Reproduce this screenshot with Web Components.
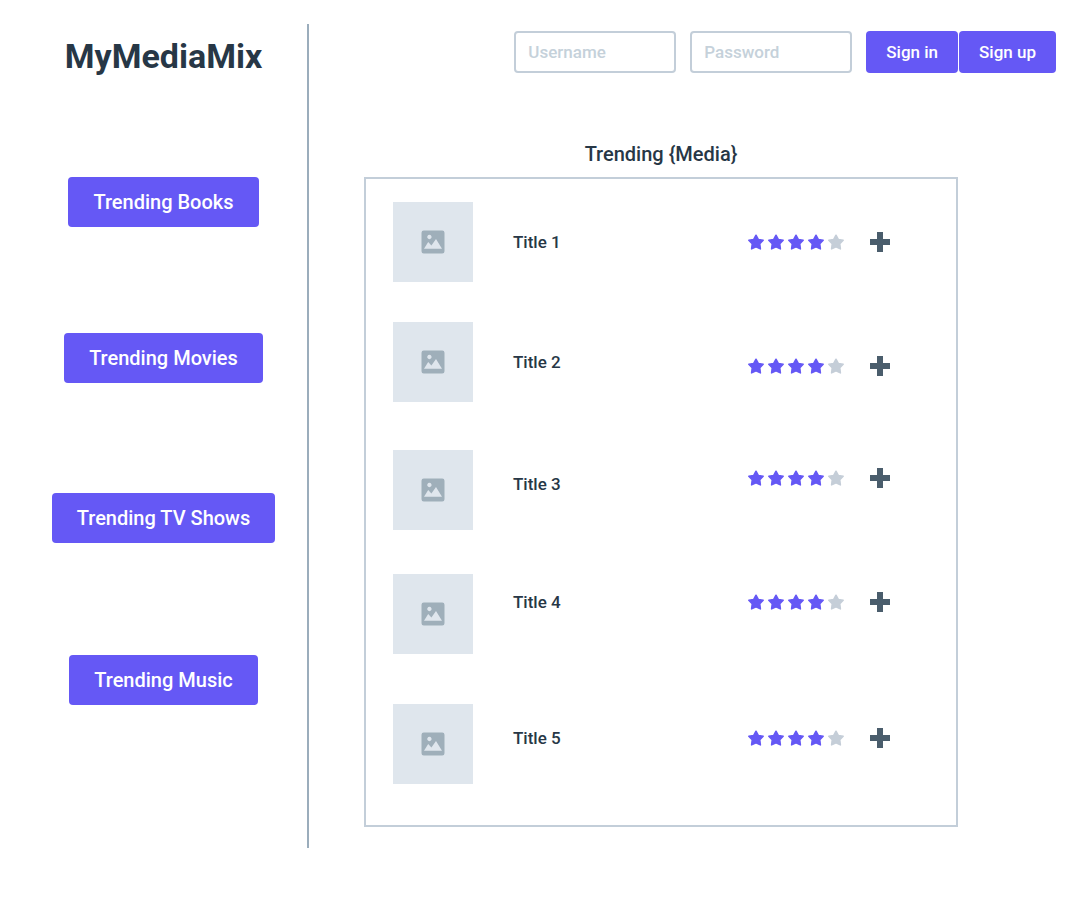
<!DOCTYPE html>
<html lang="en">
<head>
<meta charset="utf-8">
<meta name="viewport" content="width=device-width, initial-scale=1">
<title>MyMediaMix</title>
<style>
  body {
    margin: 0;
    background: #fff;
    color: #273746;
    font: 500 17px/24px Roboto, sans-serif;
    --accent: #6558f5;
    --line: #c3ced9;
    --rule: #9badbc;
  }
</style>
</head>
<body>
<media-app></media-app>

<script>
class BaseElement extends HTMLElement {
  render(html) {
    this.attachShadow({ mode: 'open' }).innerHTML = html;
  }
}

customElements.define('media-button', class extends BaseElement {
  connectedCallback() {
    this.render(`
      <style>
        :host { display: block; }
        button {
          display: block; border: 0; border-radius: 4px; padding: 9px 20px;
          background: var(--accent); color: #fff; font: inherit; cursor: pointer;
        }
        :host([large]) button { font-size: 20px; padding: 13px 25px; }
      </style>
      <button type="button"><slot></slot></button>`);
  }
});

customElements.define('text-field', class extends BaseElement {
  connectedCallback() {
    const label = this.getAttribute('label');
    const type = this.getAttribute('type') || 'text';
    this.render(`
      <style>
        :host { display: block; flex: 0 1 162px; min-width: 0; }
        input {
          display: block; box-sizing: border-box; width: 100%; margin: 0;
          padding: 7px 12px; border: 2px solid var(--line); border-radius: 4px;
          background: #fff; color: inherit; font: inherit; line-height: 24px;
        }
        input::placeholder { color: #c5d1da; opacity: 1; }
      </style>
      <input type="${type}" placeholder="${label}" aria-label="${label}">`);
  }
});

customElements.define('star-rating', class extends BaseElement {
  connectedCallback() {
    const value = Number(this.getAttribute('value'));
    const stars = [1, 2, 3, 4, 5].map(n => `
      <svg class="${n <= value ? 'on' : ''}" viewBox="0 0 16 16" aria-hidden="true">
        <path d="M8 1.2 L10.3 5.4 L15.2 6.2 L11.8 9.8 L12.4 14.9 L8 12.9 L3.6 14.9 L4.2 9.8 L.8 6.2 L5.7 5.4 Z"/>
      </svg>`).join('');
    this.render(`
      <style>
        :host { display: block; }
        div { display: flex; gap: 4px; }
        svg { width: 16px; height: 16px; fill: #c5ced8; stroke: #c5ced8; stroke-width: 1.5; stroke-linejoin: round; }
        .on { fill: var(--accent); stroke: var(--accent); }
      </style>
      <div role="img" aria-label="${value} out of 5">${stars}</div>`);
  }
});

customElements.define('media-thumb', class extends BaseElement {
  connectedCallback() {
    this.render(`
      <style>
        :host { display: grid; place-items: center; width: 80px; height: 80px; background: #dfe6ed; }
        svg { width: 24px; height: 24px; fill: #9fafba; }
      </style>
      <svg viewBox="0 0 24 24" aria-hidden="true">
        <path fill-rule="evenodd" d="M2.8.5h18.4a2.3 2.3 0 0 1 2.3 2.3v18.4a2.3 2.3 0 0 1-2.3 2.3H2.8a2.3 2.3 0 0 1-2.3-2.3V2.8A2.3 2.3 0 0 1 2.8.5ZM3 18.8h18L15 9l-4.6 6.6L7.2 12ZM8.4 4.8a2.2 2.2 0 1 0 .01 0Z"/>
      </svg>`);
  }
});

customElements.define('add-button', class extends BaseElement {
  connectedCallback() {
    this.render(`
      <style>
        :host { display: block; }
        button { display: block; padding: 0; border: 0; background: none; cursor: pointer; }
        svg { display: block; width: 20px; height: 20px; fill: #4a5d6c; }
      </style>
      <button type="button" aria-label="Add to my mix">
        <svg viewBox="0 0 20 20" aria-hidden="true"><path d="M7 0h6v7h7v6h-7v7H7v-7H0V7h7Z"/></svg>
      </button>`);
  }
});

/* One title. title-at and rating-at pick where the text and the rating sit
   beside the thumbnail: low, middle (default), high or top. */
customElements.define('media-row', class extends BaseElement {
  connectedCallback() {
    const at = name => this.getAttribute(name) || 'middle';
    this.render(`
      <style>
        :host { display: block; }
        article { display: grid; grid-template-columns: 80px minmax(0, 1fr) auto; column-gap: 40px; align-items: center; height: 80px; }
        .low { padding-top: 8px; }
        .high { padding-bottom: 12px; }
        .top { padding-bottom: 24px; }
        .rating { display: flex; align-items: center; gap: 26px; }
      </style>
      <article>
        <media-thumb></media-thumb>
        <div class="${at('title-at')}"><slot></slot></div>
        <div class="rating ${at('rating-at')}">
          <star-rating value="${this.getAttribute('rating')}"></star-rating>
          <add-button></add-button>
        </div>
      </article>`);
  }
});

customElements.define('media-list', class extends BaseElement {
  connectedCallback() {
    this.render(`
      <style>
        :host { display: block; }
        h2 { margin: 0 0 11px; font: inherit; font-size: 20px; line-height: 24px; text-align: center; }
        .frame {
          display: grid; grid-template-rows: 120px 128px 124px 130px 80px;
          border: 2px solid var(--line); padding: 23px 66px 41px 27px;
        }
      </style>
      <section>
        <h2><slot name="heading"></slot></h2>
        <div class="frame"><slot></slot></div>
      </section>`);
  }
});

customElements.define('side-bar', class extends BaseElement {
  connectedCallback() {
    this.render(`
      <style>
        :host { display: block; box-sizing: border-box; border-right: 2px solid var(--rule); padding: 0 0 143px 20px; }
        h1 { margin: 0; padding: 8px 0 97px; font-size: 34px; line-height: 48px; font-weight: 700; text-align: center; }
        nav { display: grid; grid-template-rows: 156px 160px 162px 50px; justify-items: center; }
      </style>
      <h1><slot name="brand"></slot></h1>
      <nav><slot></slot></nav>`);
  }
});

customElements.define('media-app', class extends BaseElement {
  connectedCallback() {
    this.render(`
      <style>
        :host { display: grid; grid-template-columns: 309px minmax(0, 1fr); align-items: start; padding: 24px 24px 76px 0; }
        header { display: flex; justify-content: flex-end; gap: 14px; padding-top: 7px; }
        .actions { display: flex; gap: 1px; }
        media-list { margin: 69px 98px 0 55px; }
      </style>
      <side-bar>
        <span slot="brand">MyMediaMix</span>
        <media-button large>Trending Books</media-button>
        <media-button large>Trending Movies</media-button>
        <media-button large>Trending TV Shows</media-button>
        <media-button large>Trending Music</media-button>
      </side-bar>
      <main>
        <header>
          <text-field label="Username"></text-field>
          <text-field label="Password" type="password"></text-field>
          <div class="actions">
            <media-button>Sign in</media-button>
            <media-button>Sign up</media-button>
          </div>
        </header>
        <media-list>
          <span slot="heading">Trending {Media}</span>
          <media-row rating="4">Title 1</media-row>
          <media-row rating="4" rating-at="low">Title 2</media-row>
          <media-row rating="4" title-at="high" rating-at="top">Title 3</media-row>
          <media-row rating="4" title-at="top" rating-at="top">Title 4</media-row>
          <media-row rating="4" title-at="high" rating-at="high">Title 5</media-row>
        </media-list>
      </main>`);
  }
});
</script>
</body>
</html>
